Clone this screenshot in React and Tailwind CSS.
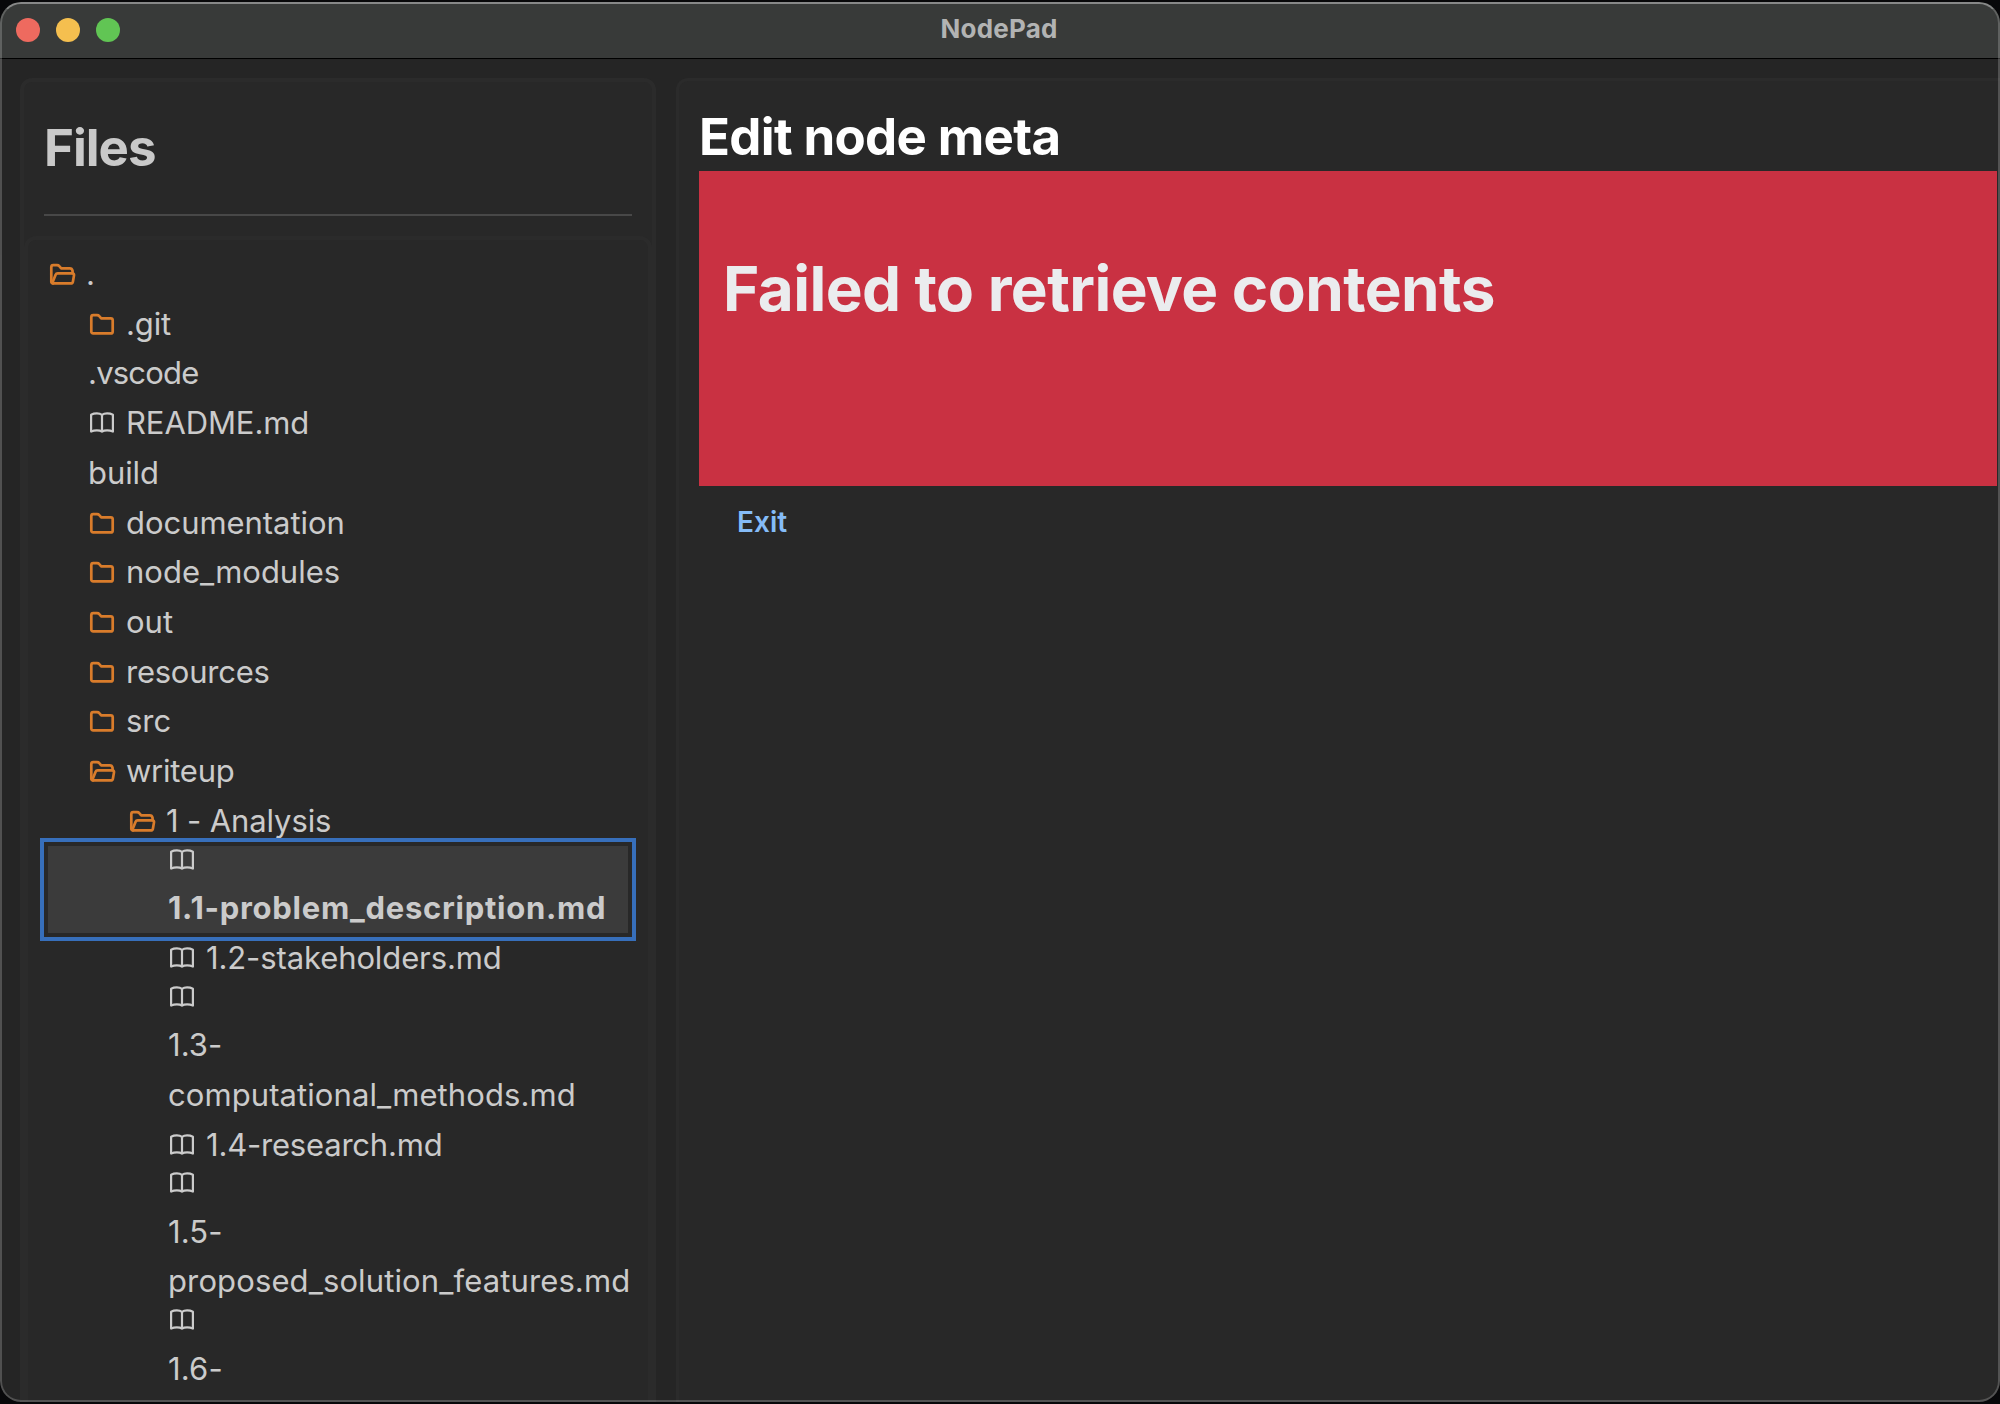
const tree = [
  { depth: 0, icon: "open", lines: ["."] },
  { depth: 1, icon: "folder", lines: [".git"], tracking: "tracking-[-0.15px]" },
  { depth: 1, lines: [".vscode"], tracking: "tracking-[-0.8px]" },
  { depth: 1, icon: "book", lines: ["README.md"], tracking: "tracking-[-0.1px]" },
  { depth: 1, lines: ["build"], tracking: "tracking-[-0.08px]" },
  { depth: 1, icon: "folder", lines: ["documentation"], tracking: "tracking-[-0.05px]" },
  { depth: 1, icon: "folder", lines: ["node_modules"] },
  { depth: 1, icon: "folder", lines: ["out"] },
  { depth: 1, icon: "folder", lines: ["resources"], tracking: "tracking-[-0.25px]" },
  { depth: 1, icon: "folder", lines: ["src"] },
  { depth: 1, icon: "open", lines: ["writeup"], tracking: "tracking-[-0.25px]" },
  { depth: 2, icon: "open", lines: ["1 - Analysis"], tracking: "tracking-[-0.12px]" },
  { depth: 3, icon: "book", wrap: true, selected: true, lines: ["1.1-problem_description.md"], tracking: "tracking-[0.73px]" },
  { depth: 3, icon: "book", lines: ["1.2-stakeholders.md"], tracking: "tracking-[-0.11px]" },
  { depth: 3, icon: "book", wrap: true, lines: ["1.3-", "computational_methods.md"], tracking: "tracking-[0.08px]" },
  { depth: 3, icon: "book", lines: ["1.4-research.md"], tracking: "tracking-[-0.2px]" },
  { depth: 3, icon: "book", wrap: true, lines: ["1.5-", "proposed_solution_features.md"], tracking: "tracking-[0.12px]" },
  { depth: 3, icon: "book", wrap: true, lines: ["1.6-"], tracking: "tracking-[0.16px]" },
];

const indent = ["pl-0", "pl-10", "pl-20", "pl-[120px]"];

function Icon({ kind }) {
  if (kind === "book") {
    return (
      <svg className="h-7 w-7 shrink-0 text-[#cbcbcb]" viewBox="0 0 28 28" fill="none" stroke="currentColor" strokeWidth="2.2" strokeLinejoin="round" strokeLinecap="round">
        <path d="M14 5.800C11.500 4 6.500 4 3.100 5.800V22.600C6.500 21 11.500 21 14 22.600C16.500 21 21.500 21 24.900 22.600V5.800C21.500 4 16.500 4 14 5.800V22.600" />
      </svg>
    );
  }
  return (
    <svg className="h-7 w-7 shrink-0 text-[#d97c2b]" viewBox="0 0 28 28" fill="none" stroke="currentColor" strokeWidth="2.7" strokeLinejoin="round" strokeLinecap="round">
      {kind === "open" ? (
        <>
          <path d="M5 23.400C3.900 23.400 3.300 22.700 3.300 21.700V7.200C3.300 6 4 5.200 5.200 5.200H9C10 5.200 10.700 5.500 11.300 6.200L13.200 8.300H21.800C23.200 8.300 24.200 9.200 24.500 10.600L24.700 13.100" />
          <path d="M4.300 23L7.600 14.800C8 13.800 8.600 13.400 9.600 13.400H24.300C25.600 13.400 26.200 14.200 26 15.400L24.900 21.700C24.700 22.800 24.100 23.400 23 23.400H5" />
        </>
      ) : (
        <path d="M3.300 7.200C3.300 6 4 5.200 5.200 5.200H9C10 5.200 10.700 5.500 11.300 6.200L13.200 8.300H22.800C24 8.300 24.700 9.100 24.700 10.300V21.400C24.700 22.600 24 23.400 22.800 23.400H5.200C4 23.400 3.300 22.600 3.300 21.400Z" />
      )}
    </svg>
  );
}

function TreeRow({ depth, icon, wrap, lines, selected, tracking = "" }) {
  return (
    <li className={selected ? "bg-[#3b3b3b] font-bold outline-4 outline-offset-4 outline-[#376fbb]" : ""}>
      <div className={`${indent[depth]} ${wrap ? "flex-col" : "gap-2.5"} flex`}>
        {icon && (
          <div className={wrap ? "h-[37.5px]" : "pt-[11px]"}>
            <Icon kind={icon} />
          </div>
        )}
        <div className={tracking}>
          {lines.map((line) => (
            <div key={line} className="leading-[49.72px] whitespace-nowrap">{line}</div>
          ))}
        </div>
      </div>
    </li>
  );
}

export default function App() {
  return (
    <div className="h-[1404px] w-[2000px] overflow-hidden bg-[#08080a] pt-0.5 font-[Inter,sans-serif]">
      <div className="relative flex h-[1400px] flex-col overflow-hidden rounded-[21px] bg-[#252525]">
        <header className="grid h-14 shrink-0 grid-cols-3 items-center bg-[#383a39] px-4">
          <div className="flex gap-4">
            <span className="h-6 w-6 rounded-full bg-[#ee6a5f]" />
            <span className="h-6 w-6 rounded-full bg-[#f5bf4f]" />
            <span className="h-6 w-6 rounded-full bg-[#61c554]" />
          </div>
          <h1 className="pr-0.5 pb-1 text-center text-[26px] font-bold tracking-[0.2px] text-[#b2b3b3]">NodePad</h1>
        </header>
        <main className="flex min-h-0 flex-1 gap-5 border-t border-black pt-[19px] pl-5">
          <aside className="flex h-[1500px] w-[636px] shrink-0 flex-col rounded-t-xl border-4 border-[#2b2b2b] bg-[#282828]">
            <div className="mx-5 h-[134px] border-b-2 border-[#484848] pt-[35px]">
              <h2 className="text-[51px] leading-[62px] font-bold tracking-[-1px] text-[#c9c9c9]">Files</h2>
            </div>
            <div className="mt-5 flex-1 rounded-t-xl border-4 border-[#2b2b2b] px-5 pt-[9px]">
              <ul className="text-[31px] text-[#cbcbcb]">
                {tree.map((row) => (
                  <TreeRow key={row.lines[0]} {...row} />
                ))}
              </ul>
            </div>
          </aside>
          <section className="h-[1500px] flex-1 rounded-tl-xl border-t-3 border-l-3 border-[#2b2b2b] bg-[#282828] pt-[25px] pr-[3px] pl-5">
            <h2 className="h-[65px] text-[51px] leading-[62px] font-bold tracking-[-0.66px] text-white">Edit node meta</h2>
            <div className="h-[315px] bg-[#c93142] px-6 pt-20">
              <p className="text-[62px] leading-[75px] font-bold tracking-[-0.58px] text-[#ebecee]">Failed to retrieve contents</p>
            </div>
            <button className="mt-4 ml-[38px] block text-[28px] leading-10 font-semibold text-[#85bcf7]">Exit</button>
          </section>
        </main>
        <div className="pointer-events-none absolute inset-0 rounded-[21px] border-2 border-t-white/40 border-r-white/20 border-b-white/20 border-l-white/20" />
      </div>
    </div>
  );
}
